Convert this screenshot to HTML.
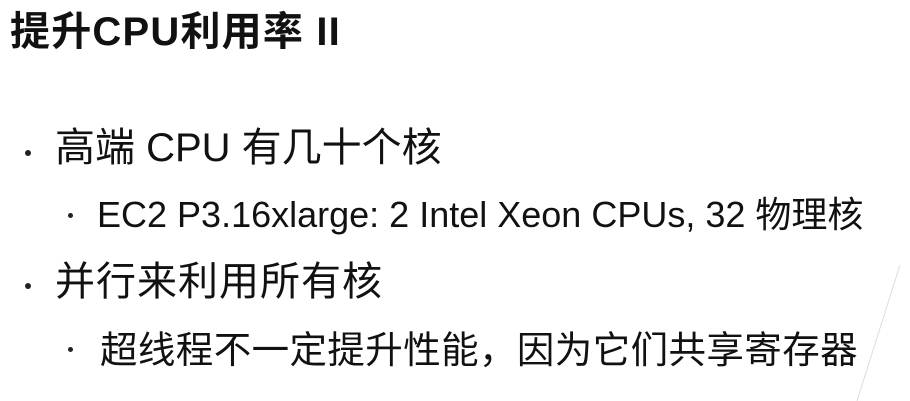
<!DOCTYPE html>
<html><head><meta charset="utf-8"><style>
body{margin:0;width:910px;height:401px;background:#fff;overflow:hidden;position:relative;font-family:"Liberation Sans","Noto Sans CJK SC",sans-serif;color:#111}
.t{position:absolute;white-space:nowrap}
.b{position:absolute;width:6px;height:6px;border-radius:50%;background:#222}
.s{position:absolute;width:5px;height:5px;border-radius:50%;background:#222}
</style></head><body>
<div class="t" style="left:10px;top:10px;font-size:40px;line-height:44px;font-weight:bold;letter-spacing:1.2px;">提升CPU利用率 II</div>
<div class="b" style="left:25px;top:150px"></div>
<div class="t" style="left:55px;top:126px;font-size:40px;line-height:44px;">高端 CPU 有几十个核</div>
<div class="s" style="left:68px;top:213px"></div>
<div class="t" style="left:97px;top:195px;font-size:36px;line-height:40px;letter-spacing:0px;">EC2 P3.16xlarge: 2 Intel Xeon CPUs, 32 物理核</div>
<div class="b" style="left:25px;top:283px"></div>
<div class="t" style="left:55px;top:260px;font-size:40px;line-height:44px;letter-spacing:1px;">并行来利用所有核</div>
<div class="s" style="left:68px;top:347px"></div>
<div class="t" style="left:100px;top:330px;font-size:37.5px;line-height:40px;letter-spacing:0.4px;">超线程不一定提升性能，因为它们共享寄存器</div>
<svg style="position:absolute;left:0;top:0" width="910" height="401"><line x1="900" y1="265" x2="857" y2="401" stroke="#ddd" stroke-width="1"/></svg>
</body></html>
